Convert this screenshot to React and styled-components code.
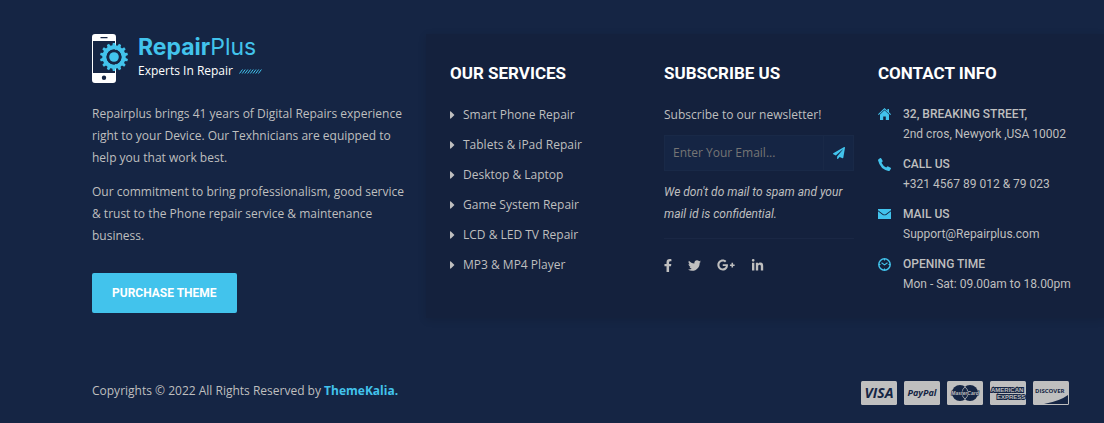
import React from 'react';
import styled, { createGlobalStyle } from 'styled-components';
import {
  FaCaretRight, FaPaperPlane, FaTwitter, FaGooglePlusG, FaLinkedinIn,
} from 'react-icons/fa';

const cyan = '#42c3ec';
const grey = '#bfbfbf';
const navy = '#152544';
const openSans = "'Open Sans', sans-serif";
const roboto = "Roboto, sans-serif";

const GlobalStyle = createGlobalStyle`
  *, *::before, *::after { box-sizing: border-box; }
  body { margin: 0; background: ${navy}; color: ${grey}; font: 12px/22px ${openSans}; }
  a { color: inherit; text-decoration: none; }
  h2, p, ul { margin: 0; padding: 0; }
  ul { list-style: none; }
`;

const Footer = styled.footer`
  background: ${navy};
  padding: 34px 0 17px 92px;
  overflow: hidden;
`;

const Top = styled.div`
  display: grid;
  grid-template-columns: minmax(0, 334px) minmax(0, 1fr);
`;

const About = styled.section`
  padding-right: 16px;
`;

const Logo = styled.a`
  display: flex;
  gap: 9px;
  height: 49px;
`;

const LogoText = styled.span`
  display: block;
`;

const Brand = styled.span`
  display: block;
  font: 400 23px/26px Inter, sans-serif;
  color: ${cyan};
  b { font-weight: 700; }
`;

const Tagline = styled.span`
  display: flex;
  align-items: center;
  gap: 6px;
  line-height: 22px;
  color: #fff;
`;

const Paragraph = styled.p`
  margin-top: ${(p) => (p.$first ? 20 : 12)}px;
`;

const Purchase = styled.button`
  margin-top: 26px;
  height: 40px;
  padding: 0 20px;
  border: 0;
  border-radius: 2px;
  background: ${cyan};
  color: #fff;
  font: 700 12px/20px ${roboto};
  cursor: pointer;
`;

const Panel = styled.div`
  display: grid;
  grid-template-columns: repeat(2, minmax(0, 190px)) minmax(0, 1fr);
  column-gap: 24px;
  padding: 28px 24px 14px;
  background: #14213d;
  box-shadow: 0 2px 8px rgba(0, 0, 0, 0.12);
`;

const Heading = styled.h2`
  color: #fff;
  font: 700 17px/22px ${roboto};
  margin-bottom: 20px;
`;

const ServiceLink = styled.a`
  display: flex;
  align-items: center;
  gap: 8px;
  margin-bottom: 8px;
  svg { width: 5px; height: 8px; }
`;

const Form = styled.form`
  display: flex;
  height: 36px;
  margin: 9px 0 10px;
  background: ${navy};
  border: 1px solid #192947;
`;

const Email = styled.input`
  flex: 1;
  min-width: 0;
  padding: 0 8px;
  border: 0;
  background: transparent;
  color: ${grey};
  font: 12px/20px ${openSans};
  &::placeholder { color: #757575; opacity: 1; }
`;

const Send = styled.button`
  display: flex;
  align-items: center;
  justify-content: center;
  width: 30px;
  padding: 0;
  border: 0;
  border-left: 1px solid #192947;
  background: transparent;
  color: ${cyan};
  cursor: pointer;
`;

const Note = styled.p`
  font: italic 400 12px/22px ${roboto};
  padding-bottom: 13px;
  border-bottom: 1px solid #1a2744;
`;

const Socials = styled.div`
  display: flex;
  align-items: center;
  gap: 16px;
  margin-top: 17px;
  a { display: flex; }
`;

const ContactItem = styled.li`
  display: grid;
  grid-template-columns: 13px 1fr;
  column-gap: 12px;
  margin-bottom: 10px;
  font: 400 12px/20px ${roboto};
  strong { display: block; font-weight: 500; }
  > svg { margin-top: 4px; color: ${cyan}; }
`;

const Bottom = styled.div`
  display: flex;
  justify-content: space-between;
  align-items: flex-start;
  margin-top: 62px;
  padding-right: 35px;
  a { color: ${cyan}; font-weight: 700; }
`;

const Cards = styled.div`
  display: flex;
  gap: 7px;
  padding-top: 1px;
  svg { display: block; }
`;

const teeth = Array.from({ length: 14 }, (_, i) => (i * 360) / 14);

function LogoMark() {
  return (
    <svg width="37" height="49" viewBox="0 0 37 49" aria-hidden="true">
      <path fillRule="evenodd" fill="#fff" d="M3 0h18a3 3 0 0 1 3 3v43a3 3 0 0 1-3 3H3a3 3 0 0 1-3-3V3a3 3 0 0 1 3-3zM1 7v32h22V7zM12 41.500a2.200 2.200 0 1 0 0 4.400a2.200 2.200 0 0 0 0-4.400zM8.500 3v1.200h7V3z" />
      <g fill={cyan}>
        {teeth.map((a) => (
          <path key={a} transform={`rotate(${a} 22 23)`} d="M20.200 12.500L20.800 9h2.400l.6 3.500z" />
        ))}
        <path fillRule="evenodd" d="M22 11.300a11.700 11.700 0 1 0 0 23.400a11.700 11.700 0 0 0 0-23.400zM22 15.500a7.500 7.500 0 1 1 0 15a7.500 7.500 0 0 1 0-15z" />
      </g>
      <circle cx="22" cy="23" r="7.500" fill={navy} />
      <circle cx="22" cy="23" r="4.800" fill={cyan} />
    </svg>
  );
}

function Hatch() {
  return (
    <svg width="24" height="5" viewBox="0 0 24 5" aria-hidden="true">
      {Array.from({ length: 8 }, (_, i) => (
        <path key={i} d={`M${i * 2.7 + 0.5} 4.500l3-4`} stroke={cyan} strokeWidth="1" />
      ))}
    </svg>
  );
}

function HomeIcon() {
  return (
    <svg width="13" height="12" viewBox="0 0 13 12" fill="currentColor" aria-hidden="true">
      <path d="M6.500 0L0 6.200l.7.700L6.500 1.400l5.800 5.500.7-.7-2-1.900V1H9.400v1.800z" />
      <path d="M6.500 2.300L2 6.600V12h3.200V8.500h2.600V12H11V6.600z" />
    </svg>
  );
}

function PhoneIcon() {
  return (
    <svg width="13" height="13" viewBox="0 0 13 13" fill="currentColor" aria-hidden="true">
      <path d="M.5 1.200L2.300.1q.6-.3 1 .3l1.300 2.400q.2.600-.2 1L3.500 4.700q1.600 3.200 4.700 4.900l1.100-1.100q.4-.4.900-.1l2.400 1.400q.6.400.3.900l-1.100 1.700q-.4.600-1.300.5Q2.200 11.500.1 2.600q-.2-.9.400-1.400z" />
    </svg>
  );
}

function MailIcon() {
  return (
    <svg width="13" height="12" viewBox="0 0 13 12" fill="currentColor" aria-hidden="true">
      <path d="M0 1h13v1.300L8 5.900q-1.500 1-3 0L0 2.300z" />
      <path d="M0 3.300l4.500 3.400q2 1.300 4 0L13 3.300V11H0z" />
    </svg>
  );
}

function ClockIcon() {
  return (
    <svg width="13" height="13" viewBox="0 0 13 13" fill="none" stroke="currentColor" aria-hidden="true">
      <circle cx="6.500" cy="6.500" r="5.700" strokeWidth="1.500" />
      <path d="M3.500 4.700l3 2.200 3-2.200M6.500 1v1.500M6.500 10.500V12M1 6.500h1.500M10.500 6.500H12" strokeWidth="1.100" />
    </svg>
  );
}

function Card({ label, children }) {
  return (
    <svg width="36" height="24" viewBox="0 0 36 24" role="img" aria-label={label}>
      <rect width="36" height="24" rx="1.500" fill={grey} />
      {children}
    </svg>
  );
}

const services = ['Smart Phone Repair', 'Tablets & iPad Repair', 'Desktop & Laptop', 'Game System Repair', 'LCD & LED TV Repair', 'MP3 & MP4 Player'];

const contacts = [
  [HomeIcon, '32, BREAKING STREET,', '2nd cros, Newyork ,USA 10002'],
  [PhoneIcon, 'CALL US', '+321 4567 89 012 & 79 023'],
  [MailIcon, 'MAIL US', 'Support@Repairplus.com'],
  [ClockIcon, 'OPENING TIME', 'Mon - Sat: 09.00am to 18.00pm'],
];

export default function App() {
  return (
    <Footer>
      <GlobalStyle />
      <Top>
        <About>
          <Logo href="#" aria-label="RepairPlus home">
            <LogoMark />
            <LogoText>
              <Brand><b>Repair</b>Plus</Brand>
              <Tagline>Experts In Repair <Hatch /></Tagline>
            </LogoText>
          </Logo>
          <Paragraph $first>Repairplus brings 41 years of Digital Repairs experience right to your Device. Our Texhnicians are equipped to help you that work best.</Paragraph>
          <Paragraph>Our commitment to bring professionalism, good service &amp; trust to the Phone repair service &amp; maintenance business.</Paragraph>
          <Purchase type="button">PURCHASE THEME</Purchase>
        </About>
        <Panel>
          <section>
            <Heading>OUR SERVICES</Heading>
            <ul>
              {services.map((s) => (
                <li key={s}><ServiceLink href="#"><FaCaretRight viewBox="0 96 192 320" preserveAspectRatio="none" />{s}</ServiceLink></li>
              ))}
            </ul>
          </section>
          <section>
            <Heading>SUBSCRIBE US</Heading>
            <label htmlFor="email">Subscribe to our newsletter!</label>
            <Form>
              <Email id="email" type="email" placeholder="Enter Your Email..." />
              <Send type="submit" aria-label="Subscribe"><FaPaperPlane size={12} /></Send>
            </Form>
            <Note>We don't do mail to spam and your mail id is confidential.</Note>
            <Socials>
              <a href="#" aria-label="Facebook">
                <svg width="8" height="13" viewBox="22 0 280 512" fill="currentColor" aria-hidden="true">
                  <path d="M279.140 288l14.220-92.660h-88.910v-60.130c0-25.350 12.420-50.060 52.240-50.060h40.420V6.260S260.430 0 225.360 0c-73.220 0-121.080 44.380-121.080 124.720v70.620H22.890V288h81.390v224h100.170V288z" />
                </svg>
              </a>
              <a href="#" aria-label="Twitter"><FaTwitter size={13} /></a>
              <a href="#" aria-label="Google Plus"><FaGooglePlusG size={18} /></a>
              <a href="#" aria-label="LinkedIn"><FaLinkedinIn size={13} /></a>
            </Socials>
          </section>
          <section>
            <Heading>CONTACT INFO</Heading>
            <ul>
              {contacts.map(([Icon, title, text]) => (
                <ContactItem key={title}><Icon /><div><strong>{title}</strong>{text}</div></ContactItem>
              ))}
            </ul>
          </section>
        </Panel>
      </Top>
      <Bottom>
        <p>Copyrights © 2022 All Rights Reserved by <a href="#">ThemeKalia.</a></p>
        <Cards>
          <Card label="Visa">
            <text x="18" y="17" textAnchor="middle" fontFamily="Open Sans" fontSize="14" fontWeight="700" fontStyle="italic" fill={navy}>VISA</text>
          </Card>
          <Card label="PayPal">
            <text x="18" y="15" textAnchor="middle" fontFamily="Open Sans" fontSize="9" fontWeight="700" fontStyle="italic" fill={navy}>PayPal</text>
          </Card>
          <Card label="MasterCard">
            <circle cx="13" cy="12" r="8" fill={navy} />
            <circle cx="23" cy="12" r="8" fill={navy} />
            <path d="M18 5.800a8 8 0 0 0 0 12.400M18 5.800a8 8 0 0 1 0 12.400" fill="none" stroke={grey} strokeWidth="0.800" />
            <text x="18" y="14" textAnchor="middle" fontFamily="Liberation Sans" fontSize="5" fontWeight="700" fontStyle="italic" fill={grey} stroke={navy} strokeWidth="1" paintOrder="stroke">MasterCard</text>
          </Card>
          <Card label="American Express">
            <text x="1" y="11" fontFamily="Liberation Sans" fontSize="6" fontWeight="700" fill={grey} stroke={navy} strokeWidth="2" paintOrder="stroke">AMERICAN</text>
            <text x="7" y="18" fontFamily="Liberation Sans" fontSize="6" fontWeight="700" fill={grey} stroke={navy} strokeWidth="2" paintOrder="stroke">EXPRESS</text>
          </Card>
          <Card label="Discover">
            <text x="2" y="12" fontFamily="Open Sans" fontSize="6" fontWeight="700" fill={navy}>DISCOVER</text>
            <path d="M35 14v9H11Q27 20 35 14z" fill={navy} />
          </Card>
        </Cards>
      </Bottom>
    </Footer>
  );
}
